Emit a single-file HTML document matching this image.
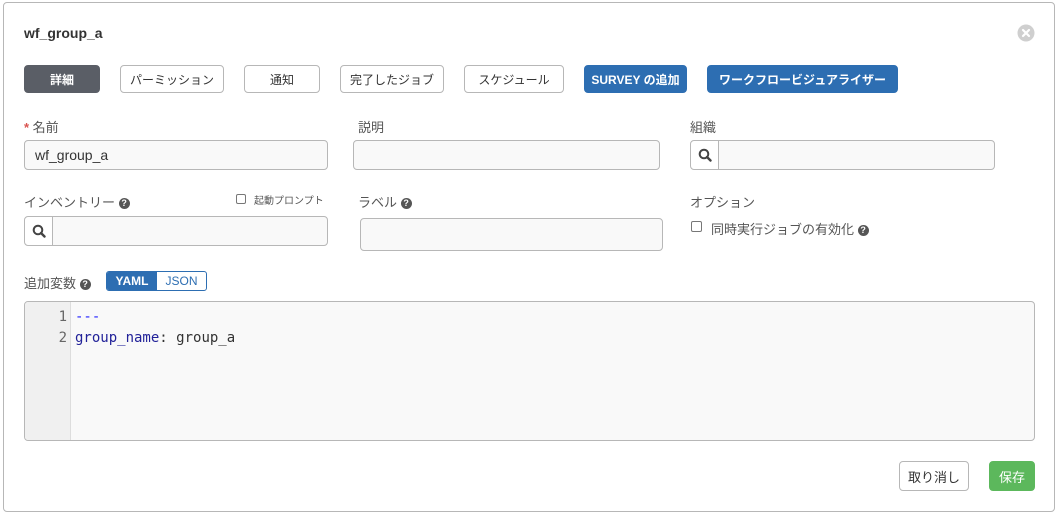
<!DOCTYPE html>
<html><head><meta charset="utf-8"><style>
*{box-sizing:border-box;margin:0;padding:0}
body{width:1058px;height:514px;background:#fff;font-family:"Liberation Sans","Noto Sans CJK JP",sans-serif;color:#333;position:relative;overflow:hidden}
.a{position:absolute}
.panel{left:3px;top:2px;width:1052px;height:510px;border:1px solid #b7b7b7;border-radius:4px}
.btn{position:absolute;top:65px;height:28px;border:1px solid #b7b7b7;border-radius:4px;font-size:12px;display:flex;align-items:center;justify-content:center;color:#333;background:#fff}
.dark{background:#5a5e66;border-color:#5a5e66;color:#fff;font-weight:bold}
.blue{background:#2d6eb2;border-color:#2d6eb2;color:#fff;font-weight:bold}
.lbl{position:absolute;font-size:13px;color:#555}
.inp{position:absolute;height:30px;border:1px solid #b7b7b7;border-radius:4px;background:#f9f9f9}
.add{position:absolute;left:0;top:0;bottom:0;width:28px;border-right:1px solid #b7b7b7;background:#fff;border-radius:4px 0 0 4px;display:flex;align-items:center;justify-content:center}
.q{display:inline-block;width:11px;height:11px;border-radius:50%;background:#555;color:#fff;font-size:9px;font-weight:bold;text-align:center;line-height:11px;vertical-align:middle}
.cb{position:absolute;border:1px solid #777;border-radius:2px;background:#fff}
.mono{font-family:"DejaVu Sans Mono","Liberation Mono",monospace;font-size:14px}
</style></head><body>
<div class="a panel"></div>
<div class="a" style="left:24px;top:25px;font-size:14px;font-weight:bold;color:#333">wf_group_a</div>
<svg class="a" style="left:1017px;top:24px" width="18" height="18" viewBox="0 0 18 18"><circle cx="9" cy="9" r="8.5" fill="#cfcfcf"/><path d="M6 6l6 6M12 6l-6 6" stroke="#fff" stroke-width="2.2" stroke-linecap="round"/></svg>

<div class="btn dark" style="left:24px;width:76px">詳細</div>
<div class="btn" style="left:120px;width:104px">パーミッション</div>
<div class="btn" style="left:244px;width:76px">通知</div>
<div class="btn" style="left:340px;width:104px">完了したジョブ</div>
<div class="btn" style="left:464px;width:100px">スケジュール</div>
<div class="btn blue" style="left:584px;width:103px">SURVEY の追加</div>
<div class="btn blue" style="left:707px;width:191px">ワークフロービジュアライザー</div>

<div class="lbl" style="left:24px;top:117px"><span style="color:#d9534f;font-weight:bold">*</span> 名前</div>
<div class="inp" style="left:24px;top:140px;width:304px"><span class="a" style="left:10px;top:6px;font-size:14px;color:#333">wf_group_a</span></div>
<div class="lbl" style="left:358px;top:117px">説明</div>
<div class="inp" style="left:353px;top:140px;width:307px"></div>
<div class="lbl" style="left:690px;top:117px">組織</div>
<div class="inp" style="left:690px;top:140px;width:305px"><div class="add"><svg width="14" height="14" viewBox="0 0 14 14"><circle cx="6" cy="6" r="4.3" fill="none" stroke="#444" stroke-width="2"/><path d="M9 9l3.5 3.5" stroke="#444" stroke-width="2.4" stroke-linecap="round"/></svg></div></div>

<div class="lbl" style="left:24px;top:192px">インベントリー <span class="q">?</span></div>
<div class="cb" style="left:236px;top:194px;width:10px;height:10px"></div>
<div class="lbl" style="left:254px;top:192px;font-size:10px">起動プロンプト</div>
<div class="inp" style="left:24px;top:216px;width:304px"><div class="add"><svg width="14" height="14" viewBox="0 0 14 14"><circle cx="6" cy="6" r="4.3" fill="none" stroke="#444" stroke-width="2"/><path d="M9 9l3.5 3.5" stroke="#444" stroke-width="2.4" stroke-linecap="round"/></svg></div></div>
<div class="lbl" style="left:358px;top:192px">ラベル <span class="q">?</span></div>
<div class="inp" style="left:360px;top:218px;width:303px;height:33px"></div>
<div class="lbl" style="left:690px;top:192px">オプション</div>
<div class="cb" style="left:691px;top:221px;width:11px;height:11px"></div>
<div class="lbl" style="left:711px;top:219px">同時実行ジョブの有効化 <span class="q">?</span></div>

<div class="lbl" style="left:24px;top:273px">追加変数 <span class="q">?</span></div>
<div class="a" style="left:106px;top:271px;width:101px;height:20px;border:1px solid #2d6eb2;border-radius:3px;overflow:hidden;font-size:12px">
<div class="a" style="left:0;top:0;width:50px;height:18px;background:#2d6eb2;color:#fff;font-weight:bold;text-align:center;line-height:18px">YAML</div>
<div class="a" style="left:50px;top:0;width:49px;height:18px;color:#2d6eb2;text-align:center;line-height:18px">JSON</div></div>

<div class="a" style="left:24px;top:301px;width:1011px;height:140px;border:1px solid #b7b7b7;border-radius:4px;background:#f9f9f9;overflow:hidden">
<div class="a" style="left:0;top:0;width:46px;height:140px;background:#f0f0f0;border-right:1px solid #ddd"></div>
<div class="a mono" style="left:0;top:5px;width:42px;text-align:right;line-height:21px;color:#666">1<br>2</div>
<div class="a mono" style="left:50px;top:5px;line-height:21px;white-space:pre"><span style="color:#22f">---</span>
<span style="color:#229">group_name</span>: group_a</div>
</div>

<div class="btn" style="left:899px;top:461px;width:70px;height:30px;font-size:13px">取り消し</div>
<div class="btn" style="left:989px;top:461px;width:46px;height:30px;font-size:13px;background:#5cb85c;border-color:#5cb85c;color:#fff">保存</div>
</body></html>
